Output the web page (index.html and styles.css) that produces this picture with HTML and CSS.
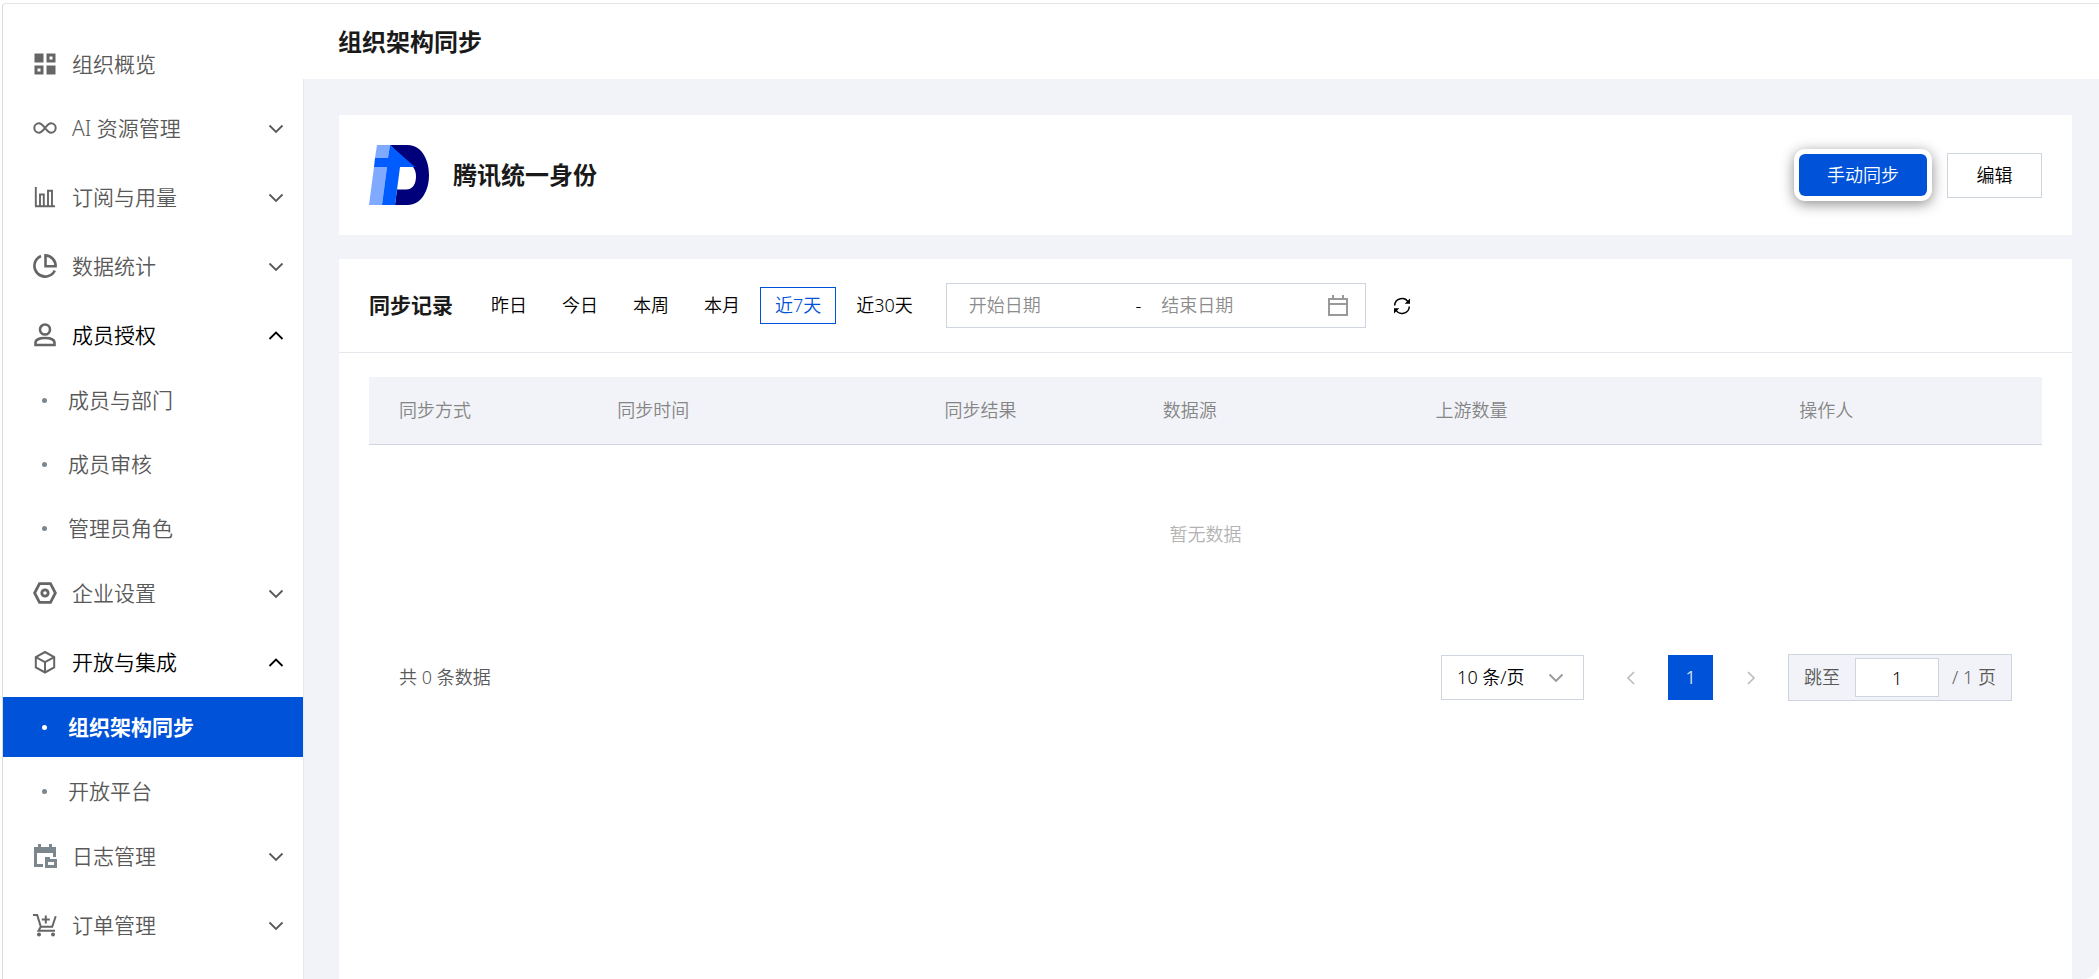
FILE: index.html
```
<!DOCTYPE html>
<html lang="zh-CN">

<head>
    <meta charset="utf-8">
    <title>组织架构同步</title>
    <link rel="stylesheet" href="styles.css">
</head>

<body>
    <svg class="sprite" aria-hidden="true">
        <symbol id="down" viewBox="0 0 16 16">
            <path d="M1.500 5.500 8 12l6.500-6.500" fill="none" stroke="currentColor" stroke-width="1.800" />
        </symbol>
        <symbol id="up" viewBox="0 0 16 16">
            <path d="M1.500 12 8 5.500l6.500 6.500" fill="none" stroke="currentColor" stroke-width="1.800" />
        </symbol>
    </svg>

    <div class="app">
        <nav class="sidebar">
            <ul class="menu">
                <li class="overview">
                    <a class="item" href="#">
                        <svg class="icon" viewBox="0 0 24 24" fill="currentColor">
                            <path d="M1.500 1.500h9v9h-9zM13.500 13.500h9v9h-9z" />
                            <path fill-rule="evenodd" d="M13.500 1.500h9v9h-9zM16.500 4.500v3h3v-3zM1.500 13.500h9v9h-9zM4.500 16.500v3h3v-3z" />
                        </svg>
                        组织概览
                    </a>
                </li>
                <li>
                    <button class="item" type="button">
                        <svg class="icon" viewBox="0 0 24 24" fill="none" stroke="currentColor" stroke-width="2">
                            <path d="M12 12C9.500 9 8.500 7.300 6 7.300a4.700 4.700 0 0 0 0 9.400c2.500 0 3.500-1.700 6-4.700s3.500-4.700 6-4.700a4.700 4.700 0 0 1 0 9.400c-2.500 0-3.500-1.700-6-4.700z" />
                        </svg>
                        AI 资源管理
                        <svg class="arrow"><use href="#down" /></svg>
                    </button>
                </li>
                <li>
                    <button class="item" type="button">
                        <svg class="icon" viewBox="0 0 24 24" fill="none" stroke="currentColor" stroke-width="1.900">
                            <path d="M2.800 2v19M2 21.200h20M7 21V9.500h3.800V21M15 21V5.800h4V21" />
                        </svg>
                        订阅与用量
                        <svg class="arrow"><use href="#down" /></svg>
                    </button>
                </li>
                <li>
                    <button class="item" type="button">
                        <svg class="icon" viewBox="0 0 24 24" fill="none" stroke="currentColor" stroke-width="2.600">
                            <path d="M8 2A10.700 10.700 0 1 0 21.800 16.500" />
                            <path d="M12.500 1.400v10.800H22.600A10.600 10.600 0 0 0 12.500 1.400z" />
                        </svg>
                        数据统计
                        <svg class="arrow"><use href="#down" /></svg>
                    </button>
                </li>
                <li>
                    <button class="item open" type="button">
                        <svg class="icon" viewBox="0 0 24 24" fill="none" stroke="currentColor" stroke-width="2.600">
                            <circle cx="12" cy="6.500" r="5" />
                            <path d="M2.500 22v-2.500C2.500 17 6 15 12 15s9.500 2 9.500 4.500V22z" />
                        </svg>
                        成员授权
                        <svg class="arrow"><use href="#up" /></svg>
                    </button>
                    <ul class="submenu">
                        <li><a class="subitem" href="#">成员与部门</a></li>
                        <li><a class="subitem" href="#">成员审核</a></li>
                        <li><a class="subitem" href="#">管理员角色</a></li>
                    </ul>
                </li>
                <li>
                    <button class="item" type="button">
                        <svg class="icon" viewBox="0 0 24 24" fill="none" stroke="currentColor" stroke-width="2.800">
                            <path d="M6.500 2.600h11L22.400 12l-4.900 9.400h-11L1.600 12z" />
                            <circle cx="12" cy="12" r="3.200" />
                        </svg>
                        企业设置
                        <svg class="arrow"><use href="#down" /></svg>
                    </button>
                </li>
                <li>
                    <button class="item open" type="button">
                        <svg class="icon" viewBox="0 0 24 24" fill="none" stroke="currentColor" stroke-width="2">
                            <path d="M12 2l9.200 5v10.500L12 22.500l-9.200-5V7zM2.800 7.200 12 12.200l9.200-5M12 12.200v10" />
                        </svg>
                        开放与集成
                        <svg class="arrow"><use href="#up" /></svg>
                    </button>
                    <ul class="submenu">
                        <li><a class="subitem active" href="#">组织架构同步</a></li>
                        <li><a class="subitem" href="#">开放平台</a></li>
                    </ul>
                </li>
                <li>
                    <button class="item" type="button">
                        <svg class="icon log" viewBox="0 0 24 24" fill="currentColor">
                            <path d="M5 0h3v3h8V0h3v3h4v10h-3V9H4v11h6v3H1V3h4z" />
                            <path fill-rule="evenodd" d="M12 13h5v2h7v9H12zM15 18v3h6v-3z" />
                        </svg>
                        日志管理
                        <svg class="arrow"><use href="#down" /></svg>
                    </button>
                </li>
                <li>
                    <button class="item" type="button">
                        <svg class="icon" viewBox="0 0 24 24" fill="none" stroke="currentColor" stroke-width="2">
                            <path d="M0 1.900h4.200l3.600 11.800h11.400l3.500-10.500M7.800 13.700l-2.300 4H22M12.800 2.500v8M8.800 6.500h8" />
                            <circle cx="6" cy="21.500" r="2" fill="currentColor" stroke="none" />
                            <circle cx="20" cy="21.500" r="2" fill="currentColor" stroke="none" />
                        </svg>
                        订单管理
                        <svg class="arrow"><use href="#down" /></svg>
                    </button>
                </li>
            </ul>
        </nav>

        <main class="main">
            <header class="topbar">
                <h1>组织架构同步</h1>
            </header>

            <div class="content">
                <section class="card source">
                    <svg class="logo" viewBox="0 0 60 60">
                        <path fill="#00007a" d="M21 0h18c13 0 21 14 21 30S52 60 39 60H26l2-15.500h9c7 0 10-6 10-13 0-4-1-7-3-9.500z" />
                        <path fill="#80aaff" d="M8 0h13l-2 13H6zM5 22h13l-5 38H0z" />
                        <path fill="#005cff" d="M21 0l25 22H31l-5 38H13l5-38H5l1-9h13z" />
                    </svg>
                    <h2>腾讯统一身份</h2>
                    <button class="btn-primary" type="button">手动同步</button>
                    <button class="btn" type="button">编辑</button>
                </section>

                <section class="card records">
                    <div class="filter">
                        <h3>同步记录</h3>
                        <div class="tabs">
                            <button type="button">昨日</button>
                            <button type="button">今日</button>
                            <button type="button">本周</button>
                            <button type="button">本月</button>
                            <button class="selected" type="button">近7天</button>
                            <button type="button">近30天</button>
                        </div>
                        <div class="range">
                            <input type="text" placeholder="开始日期" aria-label="开始日期">
                            <span>-</span>
                            <input type="text" placeholder="结束日期" aria-label="结束日期">
                            <svg class="calendar" viewBox="0 0 20 21" fill="none" stroke="currentColor" stroke-width="2">
                                <path d="M1 4h18v16H1zM1 9h18M5 0v4M15 0v4" />
                            </svg>
                        </div>
                        <button class="refresh" type="button" aria-label="刷新">
                            <svg viewBox="0 0 18 18" fill="none" stroke="currentColor" stroke-width="1.500">
                                <path d="M1.700 8.500A7.200 7.200 0 0 1 15.300 5.500M16.300 9.500A7.200 7.200 0 0 1 2.700 12.500" />
                                <path fill="currentColor" stroke="none" d="M17 1.500v5.300h-5.300zM1 16.500v-5.300h5.300z" />
                            </svg>
                        </button>
                    </div>

                    <div class="records-body">
                        <table>
                            <thead>
                                <tr>
                                    <th class="c13">同步方式</th>
                                    <th class="c20">同步时间</th>
                                    <th class="c13">同步结果</th>
                                    <th class="c16">数据源</th>
                                    <th class="c22">上游数量</th>
                                    <th class="c16">操作人</th>
                                </tr>
                            </thead>
                            <tbody>
                                <tr>
                                    <td class="empty" colspan="6">暂无数据</td>
                                </tr>
                            </tbody>
                        </table>

                        <div class="pagination">
                            <span class="total">共 0 条数据</span>
                            <div class="page-size">
                                <select aria-label="每页条数">
                                    <option>10 条/页</option>
                                    <option>20 条/页</option>
                                </select>
                                <svg><use href="#down" /></svg>
                            </div>
                            <div class="pages">
                                <button type="button" aria-label="上一页">
                                    <svg viewBox="0 0 16 16" fill="none" stroke="currentColor" stroke-width="1.600"><path d="M11 2 5 8l6 6" /></svg>
                                </button>
                                <button class="current" type="button">1</button>
                                <button type="button" aria-label="下一页">
                                    <svg viewBox="0 0 16 16" fill="none" stroke="currentColor" stroke-width="1.600"><path d="M5 2l6 6-6 6" /></svg>
                                </button>
                                <div class="jumper">
                                    <label for="page">跳至</label>
                                    <input id="page" type="text" value="1">
                                    <span>/ 1 页</span>
                                </div>
                            </div>
                        </div>
                    </div>
                </section>
            </div>
        </main>
    </div>
</body>

</html>
```
FILE: styles.css
```
* {
    box-sizing: border-box;
}

body {
    margin: 0;
    background-color: #ffffff;
    color: #000000;
    font-family: 'Noto Sans', 'Noto Sans CJK SC', sans-serif;
    font-size: 18px;
    font-weight: 350;
    line-height: 27px;
}

h1, h2, h3, ul {
    margin: 0;
    padding: 0;
}

h1, h2, h3 {
    color: #1a1a1a;
}

ul {
    list-style: none;
}

button, input, select {
    margin: 0;
    padding: 0;
    border: 0;
    background: none;
    color: inherit;
    font: inherit;
}

.sprite {
    display: none;
}

.app {
    display: flex;
    min-height: calc(100vh - 3px);
    margin: 3px 0 0 2px;
    border-top: 1px solid #e5e5e5;
    border-left: 1px solid #dcdcdc;
    border-top-left-radius: 4px;
}

/* menu lateral */
.sidebar {
    flex: none;
    width: 300px;
    padding-top: 30px;
}

.menu {
    display: flex;
    flex-direction: column;
    gap: 9px;
}

.menu .overview {
    margin-bottom: -5px;
}

.item {
    display: flex;
    align-items: center;
    width: 100%;
    height: 60px;
    padding: 0 19px 0 30px;
    color: #595959;
    font-size: 21px;
    text-align: left;
    text-decoration: none;
}

.item.open {
    color: #000000;
}

.icon {
    flex: none;
    width: 24px;
    height: 24px;
    margin-right: 15px;
    color: #666666;
}

.icon.log {
    color: #7c868d;
}

.arrow {
    width: 16px;
    height: 16px;
    margin-left: auto;
}

.submenu {
    display: flex;
    flex-direction: column;
    gap: 4px;
    margin: 5px 0 -4px;
}

.subitem {
    display: flex;
    align-items: center;
    height: 60px;
    padding-left: 39px;
    color: #595959;
    font-size: 21px;
    text-decoration: none;
}

.subitem::before {
    content: '';
    width: 5px;
    height: 5px;
    margin-right: 21px;
    border-radius: 50%;
    background-color: #7c868d;
}

.subitem.active {
    background-color: #0052d9;
    color: #ffffff;
    font-weight: 700;
}

.subitem.active::before {
    background-color: #ffffff;
}

.main {
    flex: 1;
    display: flex;
    flex-direction: column;
    min-width: 0;
}

.topbar {
    display: flex;
    align-items: center;
    height: 75px;
    padding: 0 35px;
}

.topbar h1,
.source h2 {
    font-size: 24px;
    line-height: 36px;
}

.content {
    flex: 1;
    display: flex;
    flex-direction: column;
    gap: 24px;
    padding: 36px 27px 0 35px;
    border-left: 1px solid #e8eaee;
    border-bottom-right-radius: 16px;
    background-color: #f2f3f8;
}

.card {
    background-color: #ffffff;
}

.source {
    display: flex;
    align-items: center;
    padding: 30px;
}

.logo {
    width: 60px;
    height: 60px;
    margin-right: 24px;
}

.source h2 {
    margin-right: auto;
}

.btn-primary {
    width: 128px;
    height: 42px;
    margin-right: 20px;
    border-radius: 6px;
    background-color: #0052d9;
    box-shadow: 0 0 0 5px #ffffff, 0 3px 14px 5px rgba(0, 0, 0, .45);
    color: #ffffff;
}

.btn {
    width: 95px;
    height: 45px;
    border: 1px solid #cfd5de;
}

.records {
    flex: 1;
}

.filter {
    display: flex;
    align-items: center;
    padding: 24px 30px;
    border-bottom: 1px solid #e7e8ed;
}

.filter h3 {
    margin-right: 23px;
    font-size: 21px;
}

.tabs {
    display: flex;
    gap: 5px;
    margin-right: 18px;
}

.tabs button {
    height: 37px;
    padding: 0 14px;
    border: 1px solid transparent;
}

.tabs .selected {
    border-color: #0052d9;
    color: #0052d9;
}

.range {
    display: flex;
    align-items: center;
    width: 420px;
    height: 45px;
    padding: 0 17px 0 22px;
    border: 1px solid #cfd5de;
}

.range input {
    flex: 1;
    min-width: 0;
}

.range span {
    margin: 0 20px 0 0;
}

.range input::placeholder {
    color: #8c8c8c;
    opacity: 1;
}

.calendar {
    width: 20px;
    height: 21px;
    color: #999999;
}

.refresh {
    display: flex;
    margin-left: 27px;
}

.refresh svg {
    width: 18px;
    height: 18px;
}

.records-body {
    padding: 24px 30px;
}

table {
    width: 100%;
    table-layout: fixed;
    border-collapse: collapse;
}

th {
    height: 67px;
    padding: 0 30px;
    border-bottom: 1px solid #cfd5de;
    background-color: #f2f3f8;
    color: #858585;
    font-weight: 350;
    text-align: left;
}

.c13 {
    width: 13.04%;
}

.c16 {
    width: 16.3%;
}

.c20 {
    width: 19.57%;
}

.c22 {
    width: 21.75%;
}

.empty {
    height: 180px;
    padding: 0;
    color: #b3b3b3;
    text-align: center;
}

/* paginacao */
.pagination {
    display: flex;
    align-items: center;
    gap: 24px;
    padding: 30px 30px 0;
}

.total {
    margin-right: auto;
    color: #595959;
}

.page-size {
    position: relative;
}

.page-size select {
    width: 143px;
    height: 45px;
    padding-left: 15px;
    border: 1px solid #cfd5de;
    appearance: none;
}

.page-size svg {
    position: absolute;
    top: 14px;
    right: 20px;
    width: 16px;
    height: 16px;
    color: #999999;
    pointer-events: none;
}

.pages {
    display: flex;
    align-items: center;
    gap: 15px;
}

.pages button {
    display: flex;
    align-items: center;
    justify-content: center;
    width: 45px;
    height: 45px;
    color: #bbbbbb;
}

.pages button svg {
    width: 16px;
    height: 16px;
}

.pages .current {
    background-color: #0052d9;
    color: #ffffff;
}

.jumper {
    display: flex;
    align-items: center;
    height: 47px;
    padding: 0 15px;
    border: 1px solid #cfd5de;
    background-color: #f2f3f8;
    color: #595959;
}

.jumper input {
    width: 84px;
    height: 39px;
    margin: 0 13px 0 15px;
    border: 1px solid #cfd5de;
    background-color: #ffffff;
    color: #000000;
    text-align: center;
}
```
